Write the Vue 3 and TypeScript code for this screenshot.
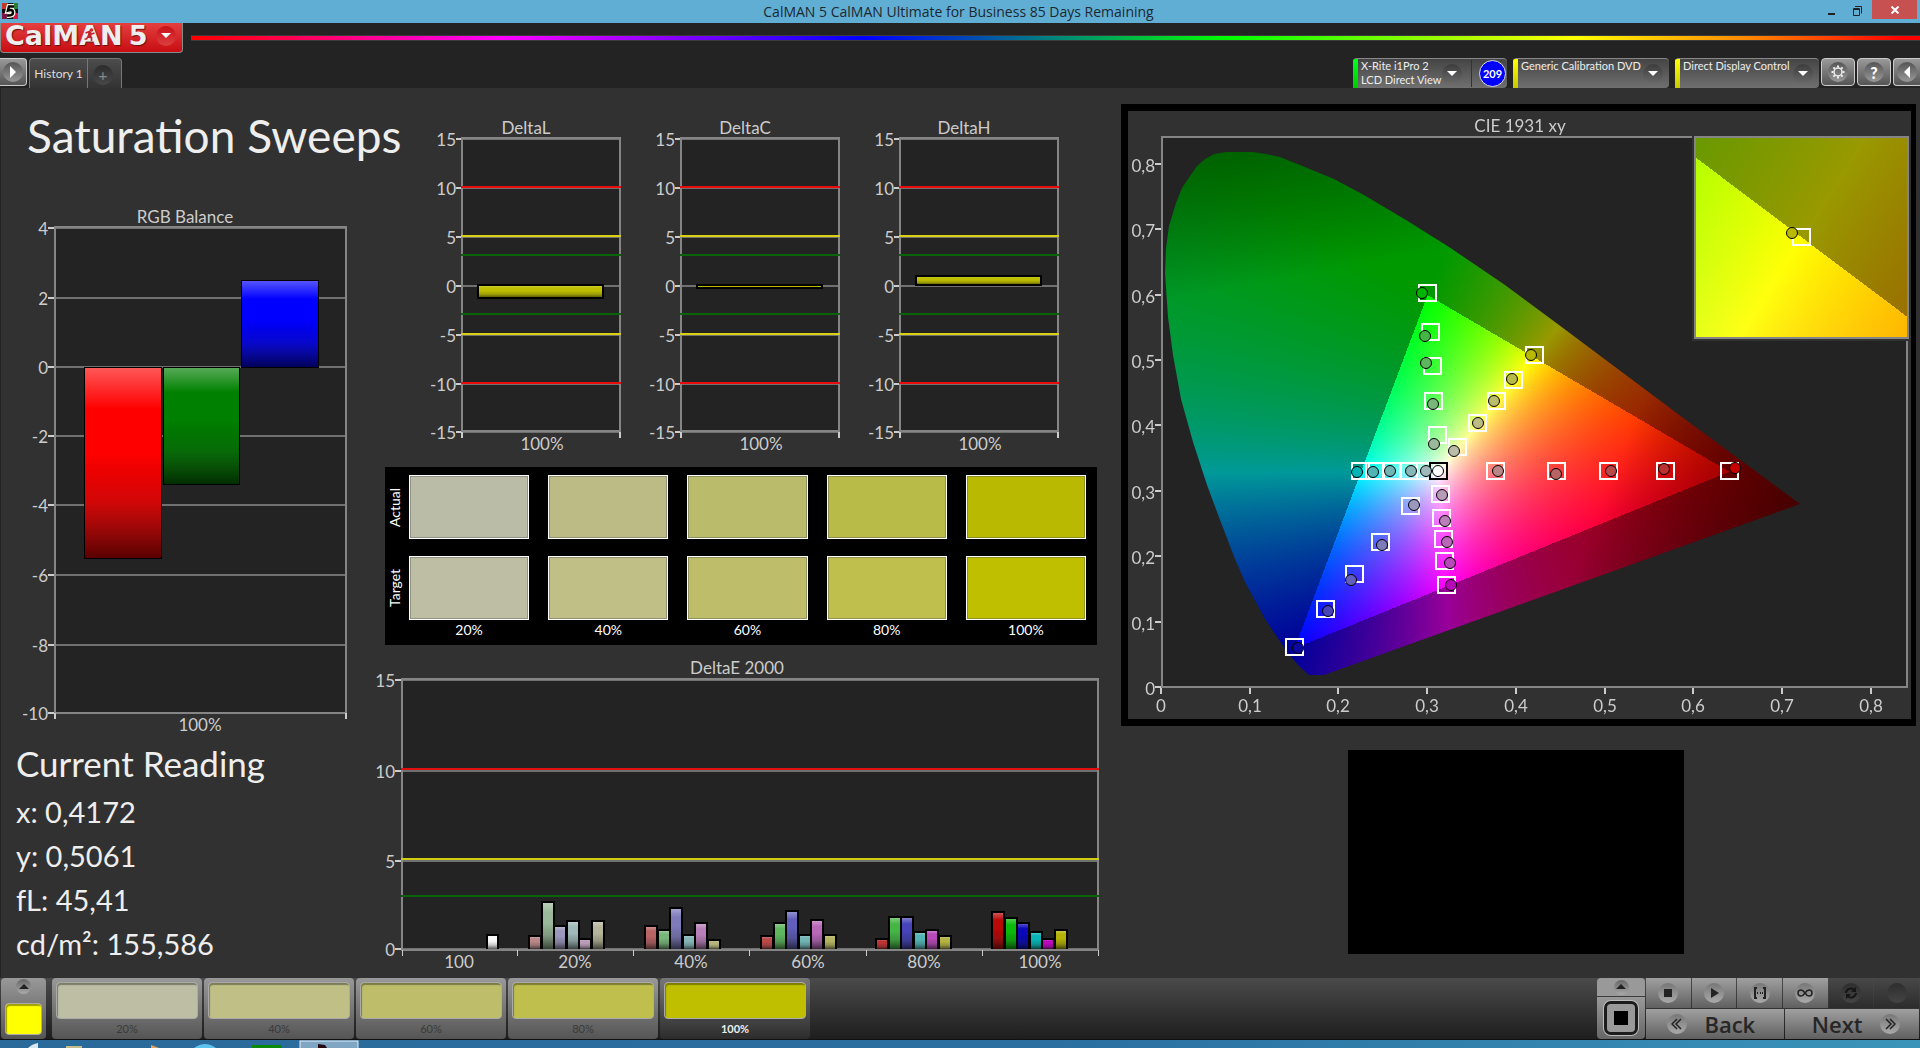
<script setup lang="ts">
import { onMounted, ref } from 'vue'

interface Bar { x: number; y: number; w: number; h: number; color: string }
interface Marker { x: number; y: number; color?: string }

/* ---------- RGB balance ---------- */
const rgbTicks = [
  { v: '4', y: 228 }, { v: '2', y: 298 }, { v: '0', y: 367 }, { v: '-2', y: 436 },
  { v: '-4', y: 505 }, { v: '-6', y: 575 }, { v: '-8', y: 645 }, { v: '-10', y: 713 },
]
const rgbBars: Bar[] = [
  { x: 84, y: 367, w: 77, h: 191, color: '#ff0000' },
  { x: 163, y: 367, w: 76, h: 117, color: '#008000' },
  { x: 241, y: 280, w: 77, h: 87, color: '#0000ff' },
]

/* ---------- Delta L / C / H ---------- */
const deltaTicks = [
  { v: '15', y: 139 }, { v: '10', y: 188 }, { v: '5', y: 237 }, { v: '0', y: 286 },
  { v: '-5', y: 335 }, { v: '-10', y: 384 }, { v: '-15', y: 432 },
]
const deltaLimits = [
  { y: 186, h: 2, c: '#e80c0c' }, { y: 235, h: 2, c: '#d8d010' }, { y: 254, h: 2, c: '#0a640a' },
  { y: 313, h: 2, c: '#0a640a' }, { y: 333, h: 2, c: '#d8d010' }, { y: 382, h: 2, c: '#e80c0c' },
]
const deltaCharts = [
  { name: 'DeltaL', y: 285, h: 13 },
  { name: 'DeltaC', y: 285, h: 3 },
  { name: 'DeltaH', y: 276, h: 9 },
]

/* ---------- Swatches ---------- */
const levels = ['20%', '40%', '60%', '80%', '100%']
const actual = ['#babca7', '#bcbb86', '#babb6b', '#b9bb48', '#b9b902']
const target = ['#bebea4', '#bfbf86', '#bebe6a', '#bebf4c', '#bfbf00']
const swatchRows = [
  { name: 'Actual', colors: actual },
  { name: 'Target', colors: target },
]

/* ---------- DeltaE 2000 ---------- */
const deTicks = [{ v: '15', y: 680 }, { v: '10', y: 771 }, { v: '5', y: 861 }, { v: '0', y: 949 }]
const deEdges = [402, 517, 633, 749, 866, 982, 1098]
const deLabels = [
  { t: '100', x: 459 }, { t: '20%', x: 575 }, { t: '40%', x: 691 },
  { t: '60%', x: 808 }, { t: '80%', x: 924 }, { t: '100%', x: 1040 },
]
const deGroups = [
  { x: 529, tops: [936, 902, 926, 921, 939, 921], c: ['#b98787', '#9ab99a', '#9a98bc', '#9fb8b9', '#b79bb8', '#b5b59b'] },
  { x: 645, tops: [926, 930, 908, 935, 923, 940], c: ['#b96464', '#79b679', '#7f7bbb', '#86b6b8', '#b880b9', '#b5b47c'] },
  { x: 761, tops: [936, 923, 911, 935, 920, 935], c: ['#b94a4a', '#5eb65e', '#615fbb', '#70b4b4', '#b968b8', '#b4b362'] },
  { x: 876, tops: [939, 917, 917, 932, 930, 936], c: ['#ba3232', '#45b645', '#4644b8', '#52b4b4', '#b74ab8', '#b4b343'] },
  { x: 992, tops: [912, 918, 923, 932, 939, 930], c: ['#b90808', '#0ab90a', '#0a08b9', '#0ab4b4', '#b908b9', '#b4b208'] },
]
const deBars: Bar[] = [{ x: 487, y: 935, w: 11, h: 14, color: '#f6f6f6' }]
for (const g of deGroups) {
  g.tops.forEach((t, i) => {
    deBars.push({ x: Math.round(g.x + i * 12.6), y: t, w: 12, h: 949 - t, color: g.c[i] })
  })
}

/* ---------- CIE chart ---------- */
const PLOT = { x0: 1161, y0: 687, sx: 887, sy: 654 }
const cieSteps = ['0', '0,1', '0,2', '0,3', '0,4', '0,5', '0,6', '0,7', '0,8']
const cieX = cieSteps.map((t, i) => ({ t, x: Math.round(PLOT.x0 + i * 88.7) }))
const cieY = cieSteps.map((t, i) => ({ t, y: Math.round(PLOT.y0 - i * 65.4) }))

const targets: Marker[] = [
  { x: 1427, y: 293 }, { x: 1430, y: 332 }, { x: 1432, y: 366 }, { x: 1433, y: 401 }, { x: 1437, y: 435 },
  { x: 1534, y: 355 }, { x: 1513, y: 380 }, { x: 1496, y: 401 }, { x: 1477, y: 423 }, { x: 1457, y: 447 },
  { x: 1360, y: 471 }, { x: 1374, y: 471 }, { x: 1392, y: 471 }, { x: 1408, y: 471 }, { x: 1425, y: 471 },
  { x: 1495, y: 471 }, { x: 1556, y: 471 }, { x: 1608, y: 471 }, { x: 1665, y: 471 }, { x: 1729, y: 471 },
  { x: 1440, y: 494 }, { x: 1441, y: 518 }, { x: 1443, y: 539 }, { x: 1444, y: 561 }, { x: 1446, y: 585 },
  { x: 1410, y: 506 }, { x: 1380, y: 542 }, { x: 1354, y: 574 }, { x: 1325, y: 609 }, { x: 1294, y: 647 },
]
const readings: Marker[] = [
  { x: 1422, y: 293, color: '#02b402' }, { x: 1425, y: 336, color: '#45b645' }, { x: 1426, y: 363, color: '#5eb65e' },
  { x: 1433, y: 404, color: '#79b679' }, { x: 1434, y: 444, color: '#9ab99a' },
  { x: 1531, y: 355, color: '#b9b902' }, { x: 1512, y: 379, color: '#b9bb48' }, { x: 1494, y: 401, color: '#babb6b' },
  { x: 1478, y: 423, color: '#bcbb86' }, { x: 1454, y: 451, color: '#babca7' },
  { x: 1357, y: 472, color: '#02b4b4' }, { x: 1373, y: 472, color: '#52b4b4' }, { x: 1390, y: 471, color: '#70b4b4' },
  { x: 1411, y: 471, color: '#86b6b8' }, { x: 1426, y: 471, color: '#9fb8b9' },
  { x: 1498, y: 471, color: '#b98787' }, { x: 1556, y: 474, color: '#b96464' }, { x: 1611, y: 471, color: '#b94a4a' },
  { x: 1664, y: 469, color: '#ba3232' }, { x: 1735, y: 468, color: '#c40202' },
  { x: 1442, y: 495, color: '#b79bb8' }, { x: 1445, y: 521, color: '#b880b9' }, { x: 1447, y: 542, color: '#b968b8' },
  { x: 1450, y: 563, color: '#b74ab8' }, { x: 1451, y: 585, color: '#b908b9' },
  { x: 1414, y: 505, color: '#9a98bc' }, { x: 1382, y: 545, color: '#7f7bbb' }, { x: 1351, y: 580, color: '#615fbb' },
  { x: 1328, y: 611, color: '#4644b8' }, { x: 1298, y: 648, color: '#0a08a0' },
]

const locus: [number, number][] = [
  [1324, 675], [1309, 675], [1299, 666], [1288, 653], [1273, 631], [1265, 619], [1245, 582], [1235, 559],
  [1220, 520], [1207, 485], [1193, 442], [1181, 399], [1173, 355], [1168, 317], [1165, 273], [1166, 248],
  [1169, 226], [1176, 203], [1182, 188], [1190, 176], [1197, 166], [1205, 159], [1214, 154], [1226, 152],
  [1253, 152], [1266, 154], [1280, 157], [1300, 165], [1334, 179], [1364, 195], [1406, 220], [1449, 247],
  [1480, 268], [1505, 285], [1559, 325], [1686, 420], [1800, 504],
]
const canvas = ref<HTMLCanvasElement | null>(null)

/* Colour of a chromaticity; points outside the Rec. 709 triangle are dimmed. */
function chroma(x: number, y: number): [number, number, number] {
  const X = x / y
  const Z = (1 - x - y) / y
  let r = 3.2406 * X - 1.5372 - 0.4986 * Z
  let g = -0.9689 * X + 1.8758 + 0.0415 * Z
  let b = 0.0557 * X - 0.204 + 1.057 * Z
  let k = Math.min(r, g, b) < 0 ? 153 : 255
  r = Math.max(r, 0)
  g = Math.max(g, 0)
  b = Math.max(b, 0)
  k /= Math.max(r, g, b)
  const red = x - 0.3 * (y - 0.33) - 0.51
  const green = y + 0.25 * (0.2 - x) - 0.64
  if (red > 0) k *= Math.exp(-3.5 * red)
  if (green > 0) k *= Math.exp(-2.1 * green)
  return [r * k, g * k, b * k]
}

function field(w: number, h: number, at: (i: number, j: number) => [number, number]) {
  const layer = document.createElement('canvas')
  layer.width = w
  layer.height = h
  const c = layer.getContext('2d')!
  const img = c.createImageData(w, h)
  for (let j = 0; j < h; j++) {
    for (let i = 0; i < w; i++) {
      const [x, y] = at(i, j)
      const rgb = chroma(x, Math.max(y, 0.001))
      const o = (j * w + i) * 4
      img.data[o] = rgb[0]
      img.data[o + 1] = rgb[1]
      img.data[o + 2] = rgb[2]
      img.data[o + 3] = 255
    }
  }
  c.putImageData(img, 0, 0)
  return layer
}

onMounted(() => {
  const ctx = canvas.value!.getContext('2d')!
  ctx.translate(-1128, -111)
  ctx.fillStyle = '#232323'
  ctx.fillRect(1161, 136, 746, 551)
  ctx.save()
  ctx.beginPath()
  for (const p of locus) ctx.lineTo(p[0], p[1])
  ctx.closePath()
  ctx.clip()
  ctx.drawImage(field(746, 551, (i, j) => [i / PLOT.sx, (551 - j) / PLOT.sy]), 1161, 136)
  ctx.restore()
  ctx.fillStyle = '#313131'
  ctx.fillRect(1692, 130, 219, 211)
  ctx.drawImage(field(211, 200, (i, j) => [0.3943 + i * 0.000237, 0.5303 - j * 0.00025]), 1696, 137)
})

const readingLines = ['x: 0,4172', 'y: 0,5061', 'fL: 45,41', 'cd/m²: 155,586']
</script>

<template>
  <div class="app">
    <header class="titlebar">
      <svg class="app-icon" viewBox="0 0 16 16" aria-hidden="true">
        <rect width="16" height="16" fill="#111" />
        <rect width="6" height="6" fill="#c0392b" /><rect x="11" width="5" height="6" fill="#2e7d32" />
        <rect y="10" width="5" height="6" fill="#7b1540" /><rect x="11" y="10" width="5" height="6" fill="#d01840" />
        <path d="M12 3.500H7L6 7.500q5-1.500 5 2 0 3.500-6 3" fill="none" stroke="#f4f4e8" stroke-width="5" />
        <path d="M12 3.500H7L6 7.500q5-1.500 5 2 0 3.500-6 3" fill="none" stroke="#000" stroke-width="2.500" />
      </svg>
      <h1 class="window-title">CalMAN 5 CalMAN Ultimate for Business 85 Days Remaining</h1>
      <div class="window-buttons">
        <button class="wb" aria-label="Minimize"><svg width="12" height="16"><rect x="4" y="11" width="7" height="2" fill="#222" /></svg></button>
        <button class="wb" aria-label="Restore">
          <svg width="14" height="16" fill="none" stroke="#222"><path d="M4.500 6.500h6v7h-6z M4 7.500h7 M6 4.500h6.500v7" /></svg>
        </button>
        <button class="wb close" aria-label="Close">
          <svg width="10" height="8" stroke="#fff" stroke-width="2"><path d="M1.500 0.500l7 7m0-7l-7 7" /></svg>
        </button>
      </div>
    </header>

    <div class="brand-row">
      <button class="brand">
        <span class="logo">CalMAN<i class="gap"></i>5
          <svg class="runner" viewBox="0 0 12 14" fill="none" stroke="#c8232a" stroke-width="1.600" aria-hidden="true">
            <circle cx="8" cy="2" r="1" /><path d="M2 5l4-1.500 2 2.500 3-1M6 4L5 8l3 2v3M5 8l-2 3H1" />
          </svg>
        </span>
        <span class="round red"><svg width="10" height="6"><path d="M0 0h10L5 5z" fill="#fff" /></svg></span>
      </button>
      <div class="rainbow"></div>
    </div>

    <nav class="tabs">
      <button class="side left" aria-label="Expand"><span class="round"><svg width="8" height="12"><path d="M1 0v12l6-6z" fill="#fff" /></svg></span></button>
      <button class="tab">History 1</button>
      <button class="tab plus" aria-label="Add tab"><span class="round dark">+</span></button>
      <div class="devices">
        <button class="device meter">
          <span class="stripe green"></span>
          <span class="device-text">X-Rite i1Pro 2<br />LCD Direct View</span>
          <span class="round shade"><svg width="10" height="6"><path d="M0 0h10L5 5z" fill="#fff" /></svg></span>
          <span class="badge-cell"><span class="badge">209</span></span>
        </button>
        <button class="device source">
          <span class="stripe"></span>
          <span class="device-text">Generic Calibration DVD</span>
          <span class="round shade"><svg width="10" height="6"><path d="M0 0h10L5 5z" fill="#fff" /></svg></span>
        </button>
        <button class="device display">
          <span class="stripe"></span>
          <span class="device-text">Direct Display Control</span>
          <span class="round shade"><svg width="10" height="6"><path d="M0 0h10L5 5z" fill="#fff" /></svg></span>
        </button>
        <button class="side" aria-label="Settings">
          <span class="round">
            <svg width="14" height="14" viewBox="-7 -7 14 14" stroke="#eee" fill="none">
              <circle r="4" stroke-width="1.500" />
              <path stroke-width="2" d="M0-4.500V-6.500M0 4.500v2M-4.500 0h-2M4.500 0h2M-3.200-3.200l-1.400-1.400M3.200-3.200l1.400-1.400M-3.200 3.200l-1.400 1.400M3.200 3.200l1.400 1.400" />
            </svg>
          </span>
        </button>
        <button class="side help" aria-label="Help"><span class="round">?</span></button>
        <button class="side right" aria-label="Collapse"><span class="round"><svg width="8" height="12"><path d="M7 0v12L1 6z" fill="#fff" /></svg></span></button>
      </div>
    </nav>

    <main class="workspace">
      <section class="left-col">
        <h2>Saturation Sweeps</h2>
        <svg class="chart" viewBox="0 204 370 532" role="img" aria-label="RGB Balance">
          <defs>
            <linearGradient id="gloss" x1="0" y1="0" x2="0" y2="1">
              <stop offset="0" stop-color="#fff" stop-opacity=".35" />
              <stop offset=".22" stop-color="#fff" stop-opacity="0" />
              <stop offset=".45" stop-color="#000" stop-opacity="0" />
              <stop offset=".7" stop-color="#222" stop-opacity=".2" />
              <stop offset="1" stop-color="#000" stop-opacity=".65" />
            </linearGradient>
          </defs>
          <text x="185" y="223" class="mid">RGB Balance</text>
          <g shape-rendering="crispEdges">
            <rect x="54" y="226" width="293" height="487" class="plot" />
            <g v-for="t in rgbTicks" :key="t.v">
              <path :d="`M54 ${t.y}H347`" class="grid" />
              <path :d="`M48 ${t.y}H54`" class="tick" />
            </g>
            <rect x="55" y="227" width="291" height="486" class="frame" />
            <path d="M55 713v6M346 713v6" class="tick" />
            <g v-for="b in rgbBars" :key="b.x">
              <rect :x="b.x" :y="b.y" :width="b.w" :height="b.h" :fill="b.color" />
              <rect :x="b.x" :y="b.y" :width="b.w" :height="b.h" fill="url(#gloss)" stroke="#000" />
            </g>
          </g>
          <text v-for="t in rgbTicks" :key="t.v" x="48" :y="t.y + 7" class="end">{{ t.v }}</text>
          <text x="200" y="731" class="mid">100%</text>
        </svg>
        <div class="reading">
          <h3>Current Reading</h3>
          <p v-for="line in readingLines" :key="line">{{ line }}</p>
        </div>
      </section>

      <section>
        <div class="deltas">
          <svg v-for="c in deltaCharts" :key="c.name" class="chart" viewBox="0 112 219 346" role="img" :aria-label="c.name">
            <text x="111" y="134" class="mid">{{ c.name }}</text>
            <g shape-rendering="crispEdges">
              <rect x="46" y="138" width="160" height="294" class="plot" />
              <g v-for="t in deltaTicks" :key="t.v">
                <path :d="`M46 ${t.y}H206`" class="grid" />
                <path :d="`M41 ${t.y}H46`" class="tick" />
              </g>
              <rect x="47" y="138" width="158" height="293" class="frame" />
              <rect v-for="l in deltaLimits" :key="l.y" x="46" :y="l.y" width="160" :height="l.h" :fill="l.c" />
              <path d="M47 432v6M205 432v6" class="tick" />
              <rect x="63" :y="c.y" width="125" :height="c.h" fill="#bfbf00" />
              <rect x="63" :y="c.y" width="125" :height="c.h" fill="url(#gloss)" stroke="#000" stroke-width="2" />
            </g>
            <text v-for="t in deltaTicks" :key="t.v" x="41" :y="t.y + 7" class="end">{{ t.v }}</text>
            <text x="127" y="450" class="mid">100%</text>
          </svg>
        </div>

        <div class="swatches">
          <template v-for="row in swatchRows" :key="row.name">
            <span class="row-name">{{ row.name }}</span>
            <span v-for="c in row.colors" :key="c" class="swatch" :style="{ background: c }"></span>
          </template>
          <span></span>
          <span v-for="l in levels" :key="l" class="level">{{ l }}</span>
        </div>

        <svg class="chart" viewBox="370 654 740 324" role="img" aria-label="DeltaE 2000">
          <text x="737" y="674" class="mid">DeltaE 2000</text>
          <g shape-rendering="crispEdges">
            <rect x="401" y="678" width="698" height="272" class="plot" />
            <g v-for="t in deTicks" :key="t.v">
              <path :d="`M401 ${t.y}H1099`" class="grid" />
              <path :d="`M395 ${t.y}H401`" class="tick" />
            </g>
            <rect x="402" y="679" width="696" height="271" class="frame" />
            <rect x="401" y="768" width="698" height="2" fill="#e01010" />
            <rect x="401" y="858" width="698" height="2" fill="#d0cc10" />
            <rect x="401" y="895" width="698" height="2" fill="#0a640a" />
            <path v-for="x in deEdges" :key="x" :d="`M${x} 950v6`" class="tick thin" />
            <g v-for="b in deBars" :key="b.x">
              <rect :x="b.x" :y="b.y" :width="b.w" :height="b.h" :fill="b.color" />
              <rect :x="b.x" :y="b.y" :width="b.w" :height="b.h" fill="url(#gloss)" />
              <path :d="`M${b.x} ${b.y + b.h}v${-b.h}h${b.w}v${b.h}`" fill="none" stroke="#000" stroke-width="2" />
            </g>
          </g>
          <text v-for="t in deTicks" :key="t.v" x="395" :y="t.y + 7" class="end">{{ t.v }}</text>
          <text v-for="l in deLabels" :key="l.x" :x="l.x" y="968" class="mid">{{ l.t }}</text>
        </svg>
      </section>

      <section class="right-col">
        <div class="cie">
          <canvas ref="canvas" width="783" height="608"></canvas>
          <svg class="chart" viewBox="1128 111 783 608" role="img" aria-label="CIE 1931 xy">
            <text x="1520" y="132" class="mid">CIE 1931 xy</text>
            <g shape-rendering="crispEdges">
              <path d="M1692 137H1162V687H1907V341" class="frame" />
              <rect x="1695" y="137" width="213" height="201" class="frame" />
              <path v-for="t in cieY" :key="t.t" :d="`M1155 ${t.y}h6`" class="tick" />
              <path v-for="t in cieX" :key="t.t" :d="`M${t.x} 688v6`" class="tick" />
            </g>
            <text v-for="t in cieY" :key="t.t" x="1155" :y="t.y + 8" class="end">{{ t.t }}</text>
            <text v-for="t in cieX" :key="t.t" :x="t.x" y="712" class="mid">{{ t.t }}</text>
            <g fill="none" stroke="#fff" stroke-width="2" shape-rendering="crispEdges">
              <rect v-for="(m, i) in targets" :key="i" :x="m.x - 8" :y="m.y - 8" width="17" height="16" />
              <rect x="1430" y="463" width="17" height="16" stroke="#000" />
              <rect x="1793" y="229" width="17" height="16" />
            </g>
            <g stroke="#000">
              <circle v-for="(m, i) in readings" :key="i" :cx="m.x" :cy="m.y" r="5.500" :fill="m.color" />
              <circle cx="1438" cy="471" r="5.500" fill="#fff" />
              <circle cx="1792" cy="233" r="5.500" fill="#b9b902" />
            </g>
          </svg>
        </div>
        <div class="preview"></div>
      </section>
    </main>

    <footer class="toolbar">
      <button class="current" aria-label="Current colour">
        <span class="round tiny"><svg width="10" height="6"><path d="M0 5h10L5 0z" fill="#222" /></svg></span>
        <span class="yellow"></span>
      </button>
      <div class="patches">
        <button v-for="(l, i) in levels" :key="l" class="patch" :class="{ active: i === 4 }">
          <span class="patch-color" :style="{ background: target[i] }"></span>
          <span>{{ l }}</span>
        </button>
      </div>
      <div class="transport">
        <div class="pattern">
          <button class="pattern-up" aria-label="Show patterns"><span class="round tiny"><svg width="10" height="6"><path d="M0 5h10L5 0z" fill="#222" /></svg></span></button>
          <button class="pattern-box" aria-label="Pattern window"><span class="pattern-icon"></span></button>
        </div>
        <div class="controls">
          <div class="small-row">
            <button aria-label="Stop"><span class="round key"><svg width="8" height="8"><rect width="8" height="8" fill="#222" /></svg></span></button>
            <button aria-label="Play"><span class="round key"><svg width="10" height="10"><path d="M2 0v10l8-5z" fill="#222" /></svg></span></button>
            <button aria-label="Read series">
              <span class="round key"><svg width="14" height="12" fill="none" stroke="#222" stroke-width="2"><path d="M4 1H2v10h2M10 1h2v10h-2M4 6h1M7 6h1M9 6h1" /></svg></span>
            </button>
            <button aria-label="Continuous">
              <span class="round key"><svg width="16" height="8" fill="none" stroke="#222" stroke-width="1.500"><path d="M8 4C6 1 5 1 4 1a3 3 0 0 0 0 6c1 0 2 0 4-3s3-3 4-3a3 3 0 0 1 0 6c-1 0-2 0-4-3z" /></svg></span>
            </button>
            <button class="off" aria-label="Refresh">
              <span class="round key"><svg width="14" height="14" fill="none" stroke="#151515" stroke-width="2"><path d="M2 7a5 5 0 0 1 8-3.500M12 7a5 5 0 0 1-8 3.500" /><path d="M12 1v5H7zM2 13V8h5z" fill="#151515" stroke="none" /></svg></span>
            </button>
            <button class="off" aria-label="Record"><span class="round key"></span></button>
          </div>
          <div class="nav-row">
            <button>
              <span class="round key"><svg width="11" height="12" fill="none" stroke="#222" stroke-width="1.500"><path d="M6 1L1 6l5 5M10 1L5 6l5 5" /></svg></span>
              <span>Back</span>
            </button>
            <button>
              <span>Next</span>
              <span class="round key"><svg width="11" height="12" fill="none" stroke="#222" stroke-width="1.500"><path d="M1 1l5 5-5 5M5 1l5 5-5 5" /></svg></span>
            </button>
          </div>
        </div>
      </div>
    </footer>

    <div class="taskbar">
      <svg width="370" height="8" aria-hidden="true">
        <path d="M28 8q4-4 10-5v5z" fill="#d8e8f2" /><rect x="66" y="6" width="16" height="2" fill="#c8bd8a" />
        <path d="M151 5l8 3h-8z" fill="#e8a45c" /><path d="M194 8q11-8 22 0z" fill="#5cc4ee" />
        <rect x="252" y="5" width="30" height="3" fill="#0a8a0a" />
        <rect x="300" y="1" width="58" height="8" fill="#7fa6c2" stroke="#e6eef4" />
        <path d="M318 4l7 1 2 3h-9z" fill="#260810" />
      </svg>
    </div>
  </div>
</template>

<style>
body { background: #232323; }
</style>

<style scoped>
.app {
  background: #232323;
  color: #ccc;
  font-family: Lato, "Open Sans", sans-serif;
  font-size: 12px;
  overflow: hidden;
}
button {
  margin: 0;
  padding: 0;
  border: 0;
  background: none;
  color: inherit;
  font: inherit;
}
h1, h2, h3, p { margin: 0; font-weight: 400; }
svg { display: block; }

.titlebar {
  display: flex;
  align-items: flex-start;
  height: 23px;
  background: #61aed5;
  color: #1c2830;
  font-family: "Open Sans", sans-serif;
}
.app-icon { width: 16px; height: 16px; margin: 3px 0 0 2px; flex: none; }
.window-title { flex: 1; padding-left: 80px; text-align: center; font-size: 14px; line-height: 23px; }
.window-buttons { display: flex; width: 98px; padding-right: 3px; }
.wb { width: 25px; height: 19px; padding-left: 5px; flex: none; }
.close { display: grid; place-items: center; width: 45px; padding: 0; margin-left: auto; background: #c75050; }

.brand-row { display: flex; align-items: flex-start; gap: 8px; height: 35px; }
.brand {
  display: flex;
  align-items: center;
  width: 183px;
  height: 30px;
  padding: 0 6px 4px 4px;
  box-sizing: border-box;
  border: 1px solid #8a8a8a;
  border-top: 0;
  border-radius: 0 0 4px 4px;
  background: linear-gradient(#e4403f, #c80d12);
  flex: none;
}
.logo {
  position: relative;
  flex: 1;
  text-align: left;
  color: #eee;
  font: bold 27px/26px "DejaVu Sans", sans-serif;
  text-shadow: 1px 1px 1px #6a1010;
  white-space: nowrap;
}
.gap { display: inline-block; width: 6px; }
.runner { position: absolute; left: 78px; top: 5px; width: 13px; height: 14px; }
.rainbow {
  flex: 1;
  height: 4px;
  margin-top: 12px;
  border: 1px solid #3a3a3a;
  border-width: 1px 0;
  background: linear-gradient(90deg, #f00 0%, #f0f 18%, #00f 39%, #0f0 60%, #ff0 80%, #f80 90%, #f00 99%);
}

.round {
  display: grid;
  place-items: center;
  width: 20px;
  height: 20px;
  border-radius: 50%;
  background: linear-gradient(#555, #999);
  flex: none;
}
.round.red { background: linear-gradient(#c81018, #dc4040); }
.round.dark { background: linear-gradient(#2c2c2c, #484848); color: #888; font-size: 16px; line-height: 20px; }
.round.shade { background: linear-gradient(#3c3c3c, #6a6a6a); }
.round.tiny { width: 15px; height: 15px; background: linear-gradient(#666, #aaa); }
.round.key { background: linear-gradient(#777, #aaa); }

.tabs { display: flex; align-items: flex-start; height: 30px; }
.side {
  display: grid;
  place-items: center;
  width: 34px;
  height: 28px;
  box-sizing: border-box;
  border: 1px solid #ccc;
  border-radius: 4px;
  background: linear-gradient(#999, #555);
  color: #fff;
}
.side.left { width: 27px; padding-right: 1px; border-left: 0; border-radius: 0 4px 4px 0; margin-right: 2px; }
.side.right { width: 27px; border-right: 0; border-radius: 4px 0 0 4px; }
.help { font-size: 16px; font-weight: 900; }
.tab {
  width: 59px;
  height: 30px;
  box-sizing: border-box;
  border: 1px solid #777;
  border-bottom: 0;
  border-radius: 4px 0 0 0;
  background: linear-gradient(#4c4c4c, #333);
  color: #ddd;
}
.tab.plus { display: grid; place-items: center; width: 34px; padding: 3px 3px 0 0; border-left: 0; border-radius: 0 4px 0 0; }
.devices { display: flex; margin-left: auto; }
.device {
  display: flex;
  align-items: center;
  height: 30px;
  margin-right: 6px;
  padding-right: 6px;
  box-sizing: border-box;
  border-top: 1px solid #888;
  border-radius: 4px;
  background: linear-gradient(#444, #707070);
  color: #eee;
  font-size: 11px;
}
.meter { width: 154px; padding-right: 1px; }
.source { width: 156px; }
.display { width: 144px; margin-right: 2px; }
.stripe { width: 5px; height: 29px; background: linear-gradient(#ff0, #c8c800); border-radius: 2px 0 0 0; }
.stripe.green { background: linear-gradient(#0f2, #0c0); }
.device-text { flex: 1; align-self: flex-start; padding-left: 3px; text-align: left; line-height: 14px; white-space: nowrap; }
.badge-cell { margin-left: 9px; padding-left: 7px; border-left: 1px solid #333; }
.badge {
  display: block;
  width: 25px;
  height: 25px;
  border: 1px solid #ddd;
  border-radius: 50%;
  background: #00f;
  color: #fff;
  font-weight: 700;
  line-height: 25px;
}
.side + .side { margin-left: 2px; }

.workspace {
  display: grid;
  grid-template-columns: minmax(0, 370fr) minmax(0, 740fr) minmax(0, 810fr);
  background: #313131;
  box-shadow: inset 1px 0 #232323;
}
.chart { width: 100%; height: auto; }
.chart text { fill: #ccc; font-size: 17px; }
.mid { text-anchor: middle; }
.end { text-anchor: end; }
.plot { fill: #232323; }
.frame { fill: none; stroke: #858585; stroke-width: 2; }
.grid { stroke: #707070; stroke-width: 2; }
.tick { stroke: #ccc; stroke-width: 2; }
.tick.thin { stroke-width: 1; }

h2 { padding: 18px 0 0 27px; color: #eee; font-size: 46px; line-height: 60px; white-space: nowrap; }
.left-col .chart { margin-top: 38px; }
.reading { padding-left: 16px; color: #eee; }
h3 { padding-top: 7px; font-size: 35px; line-height: 40px; }
.reading p { padding-top: 4px; font-size: 29px; line-height: 40px; }
.reading h3 + p { padding-top: 9px; }

.deltas { display: grid; grid-template-columns: repeat(3, 1fr); padding: 24px 38px 0 45px; }
.swatches {
  display: grid;
  grid-template-columns: 5px repeat(5, 1fr);
  grid-template-rows: 64px 64px 20px;
  gap: 17px 19px;
  height: 178px;
  margin: 9px 13px 9px 15px;
  padding: 8px 11px 0 0;
  box-sizing: border-box;
  background: #000;
  color: #fff;
}
.row-name { width: 16px; margin-left: 2px; writing-mode: vertical-rl; transform: rotate(180deg); text-align: center; line-height: 16px; font-size: 14px; }
.swatch { border: 1px solid #fff; box-shadow: inset 0 0 0 1px rgba(80, 80, 80, .4); }
.level { margin-top: -16px; text-align: center; font-size: 14px; line-height: 18px; }

.right-col { padding: 16px 4px 0 11px; }
.cie { position: relative; border: solid #000; border-width: 7px 5px 7px 7px; background: #313131; }
.cie canvas { position: absolute; inset: 0; width: 100%; height: 100%; }
.cie .chart { position: relative; }
.preview { width: 336px; height: 204px; margin: 24px 0 0 227px; background: #000; }

.toolbar {
  display: flex;
  height: 61px;
  padding: 0 1px;
  border-bottom: 1px solid #111;
  background: linear-gradient(#4a4a4a, #1e1e1e);
}
.current {
  display: flex;
  flex-direction: column;
  align-items: center;
  justify-content: space-between;
  width: 45px;
  padding: 1px 0 4px;
  box-sizing: border-box;
  border-radius: 4px;
  background: linear-gradient(#999, #555);
}
.yellow { width: 35px; height: 30px; border: 1px solid #aaa; border-radius: 4px; background: #ff0; box-shadow: inset 1px 2px 1px #a0a000; }
.patches { display: flex; gap: 2px; margin-left: 6px; }
.patch {
  display: flex;
  flex-direction: column;
  align-items: center;
  width: 150px;
  padding-top: 4px;
  border-radius: 4px;
  background: linear-gradient(#999, #555);
  color: #3a3a3a;
  font-size: 11px;
  line-height: 20px;
}
.patch-color { width: 140px; height: 36px; border: 1px solid #aaa; border-radius: 4px; box-shadow: inset 1px 2px 1px rgba(0, 0, 0, .35); }
.patch.active { background: linear-gradient(#777, #2c2c2c); color: #eee; font-weight: 700; }

.transport { display: flex; gap: 1px; margin-left: auto; }
.pattern { display: flex; flex-direction: column; gap: 1px; width: 48px; }
.pattern button { display: grid; place-items: center; background: linear-gradient(#999, #666); }
.pattern .pattern-up { height: 18px; border-radius: 4px 4px 0 0; background: #999; }
.pattern .pattern-box { flex: 1; border-radius: 0 0 4px 4px; }
.pattern-icon {
  width: 14px;
  height: 14px;
  border: 7px solid #999;
  border-radius: 4px;
  background: #000;
  outline: 3px solid #1c1c1c;
  box-shadow: 0 0 0 4px #bbb;
}
.controls { display: flex; flex-direction: column; gap: 1px; width: 273px; }
.small-row, .nav-row { display: flex; gap: 1px; flex: 1; }
.small-row button, .nav-row button { flex: 1; background: linear-gradient(#a0a0a0, #606060); }
.small-row button { display: grid; place-items: center; }
.small-row .off { background: linear-gradient(#484848, #2c2c2c); }
.small-row .off .key { background: linear-gradient(#2e2e2e, #444); }
.nav-row button {
  display: flex;
  align-items: center;
  justify-content: space-around;
  padding: 0 20px 0 12px;
  color: #262626;
  font: 600 22px/28px "Open Sans", sans-serif;
}
.nav-row button + button { padding: 0 10px 0 18px; }

.taskbar { height: 8px; background: linear-gradient(90deg, #2a6a9a, #2a6fa0 55%, #3a94ba); overflow: hidden; }
</style>
